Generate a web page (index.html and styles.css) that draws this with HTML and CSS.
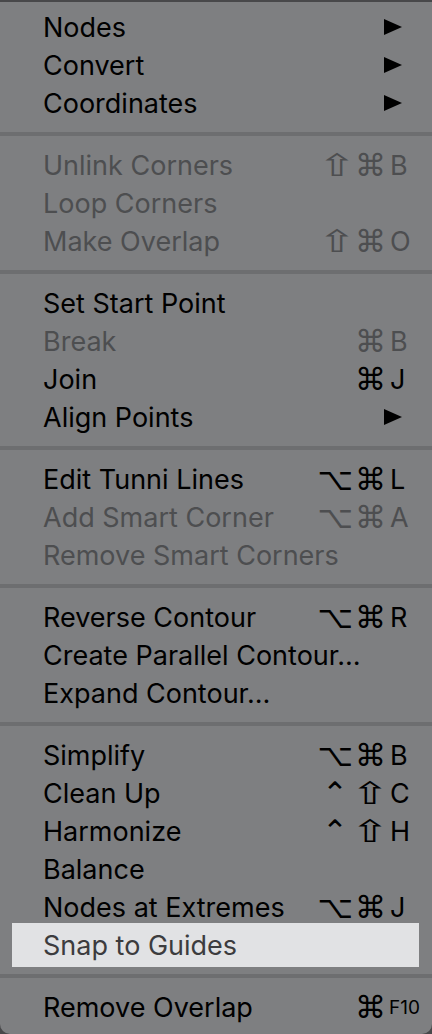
FILE: index.html
```html
<!DOCTYPE html>
<html lang="en">
<head>
    <meta charset="UTF-8">
    <title>Context menu</title>
    <link rel="stylesheet" href="styles.css">
</head>
<body>
<div class="menu">
    <div class="group">
        <div class="item"><span class="label">Nodes</span><svg class="arrow" width="18" height="16" viewBox="0 0 18 16"><polygon points="0,0 18,8 0,16"/></svg></div>
        <div class="item"><span class="label">Convert</span><svg class="arrow" width="18" height="16" viewBox="0 0 18 16"><polygon points="0,0 18,8 0,16"/></svg></div>
        <div class="item"><span class="label">Coordinates</span><svg class="arrow" width="18" height="16" viewBox="0 0 18 16"><polygon points="0,0 18,8 0,16"/></svg></div>
    </div>
    <div class="sep"></div>
    <div class="group">
        <div class="item off"><span class="label">Unlink Corners</span><span class="mods"><span class="shift">⇧</span>⌘</span><span class="key">B</span></div>
        <div class="item off"><span class="label">Loop Corners</span></div>
        <div class="item off"><span class="label">Make Overlap</span><span class="mods"><span class="shift">⇧</span>⌘</span><span class="key">O</span></div>
    </div>
    <div class="sep"></div>
    <div class="group">
        <div class="item"><span class="label">Set Start Point</span></div>
        <div class="item off"><span class="label">Break</span><span class="mods">⌘</span><span class="key">B</span></div>
        <div class="item"><span class="label">Join</span><span class="mods">⌘</span><span class="key">J</span></div>
        <div class="item"><span class="label">Align Points</span><svg class="arrow" width="18" height="16" viewBox="0 0 18 16"><polygon points="0,0 18,8 0,16"/></svg></div>
    </div>
    <div class="sep"></div>
    <div class="group">
        <div class="item"><span class="label">Edit Tunni Lines</span><span class="mods">⌥⌘</span><span class="key">L</span></div>
        <div class="item off"><span class="label">Add Smart Corner</span><span class="mods">⌥⌘</span><span class="key">A</span></div>
        <div class="item off"><span class="label">Remove Smart Corners</span></div>
    </div>
    <div class="sep"></div>
    <div class="group">
        <div class="item"><span class="label">Reverse Contour</span><span class="mods">⌥⌘</span><span class="key">R</span></div>
        <div class="item"><span class="label">Create Parallel Contour…</span></div>
        <div class="item"><span class="label">Expand Contour…</span></div>
    </div>
    <div class="sep"></div>
    <div class="group">
        <div class="item"><span class="label">Simplify</span><span class="mods">⌥⌘</span><span class="key">B</span></div>
        <div class="item"><span class="label">Clean Up</span><span class="mods">⌃<span class="shift">⇧</span></span><span class="key">C</span></div>
        <div class="item"><span class="label">Harmonize</span><span class="mods">⌃<span class="shift">⇧</span></span><span class="key">H</span></div>
        <div class="item"><span class="label">Balance</span></div>
        <div class="item"><span class="label">Nodes at Extremes</span><span class="mods">⌥⌘</span><span class="key">J</span></div>
        <div class="item hover"><span class="label">Snap to Guides</span></div>
    </div>
    <div class="sep"></div>
    <div class="group">
        <div class="item"><span class="label">Remove Overlap</span><span class="mods">⌘</span><span class="key small">F10</span></div>
    </div>
</div>
</body>
</html>
```

FILE: styles.css
```css
* {
    margin: 0;
    padding: 0;
    box-sizing: border-box;
}

body {
    background: #48484a;
    padding-top: 2px;
    font-family: "Inter", "DejaVu Sans", sans-serif;
}

.menu {
    background: #7e7f81;
    border-radius: 0 0 10px 10px;
    padding: 6px 0 8px;
}

.sep {
    height: 4px;
    margin: 10px 0;
    background: #6d6e70;
}

.item {
    display: flex;
    align-items: center;
    height: 38px;
    padding-left: 43px;
    font-size: 27px;
    color: #000;
}
.item .label {
    flex: 1;
    white-space: nowrap;
}
.item.off {
    color: #4d4e50;
}
.item.hover {
    background: #e1e2e4;
    color: #3c3c3e;
    height: 44px;
    margin: -3px 13px -3px 12px;
    padding-left: 31px;
}

.arrow {
    margin-right: 30px;
    fill: #000;
}

.mods {
    font-family: "DejaVu Sans", sans-serif;
    font-size: 31px;
    line-height: 38px;
    letter-spacing: 2px;
}
.shift {
    display: inline-block;
    transform: scaleX(1.5);
    letter-spacing: 0;
    margin: 0 5px 0 7px;
}
.key {
    width: 44px;
    padding-left: 2px;
}
.key.small {
    font-size: 19px;
    padding-left: 1px;
}
```
